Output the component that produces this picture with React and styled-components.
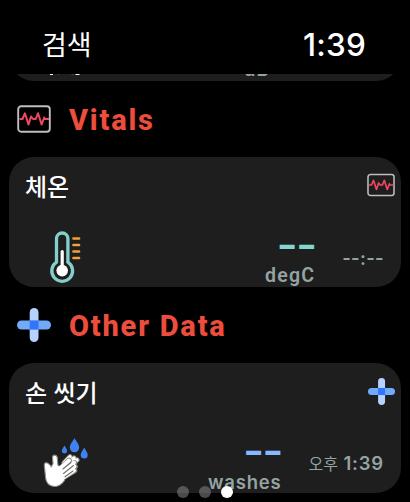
import styled, { createGlobalStyle } from "styled-components";

const GlobalStyle = createGlobalStyle`
  * {
    box-sizing: border-box;
  }
  body {
    margin: 0;
    background: #000;
    font-family: Inter, "Noto Sans CJK KR", sans-serif;
  }
  h1, h2, h3, p {
    margin: 0;
  }
`;

const Screen = styled.main`
  position: relative;
  display: flex;
  flex-direction: column;
  width: 410px;
  height: 502px;
  overflow: hidden;
  background: #000;
  color: #fff;
`;

const TopBar = styled.header`
  display: flex;
  flex: none;
  align-items: center;
  justify-content: space-between;
  height: 74px;
  padding: 16px 44px 0 42px;
`;

const ScreenTitle = styled.h1`
  padding-top: 2px;
  font-size: 27px;
  font-weight: 400;
  line-height: 40px;
`;

const Clock = styled.time`
  font-size: 31.5px;
  font-weight: 500;
  letter-spacing: 0.2px;
  line-height: 40px;
`;

const List = styled.div`
  flex: none;
  padding: 0 9px;
`;

const Peek = styled.div`
  display: flex;
  align-items: flex-end;
  height: 7px;
  overflow: hidden;
`;

const SectionHeader = styled.div`
  display: flex;
  align-items: center;
  gap: 18px;
  height: 76px;
  padding-left: 8px;
`;

const SectionTitle = styled.h2`
  color: #ed4d3d;
  font-family: Roboto, "Noto Sans CJK KR", sans-serif;
  font-size: 29px;
  font-weight: 800;
  letter-spacing: 1.8px;
  line-height: 36px;
  padding-top: 2px;
`;

const Card = styled.article`
  display: flex;
  flex: none;
  flex-direction: column;
  justify-content: space-between;
  width: 392px;
  height: 130px;
  overflow: hidden;
  border-radius: 25px;
  background: #1e1e1e;
`;

const CardTop = styled.div`
  display: flex;
  align-items: center;
  justify-content: space-between;
  height: 56px;
  padding: 0 6px 0 16px;
`;

const CardTitle = styled.h3`
  font-size: 24px;
  font-weight: 500;
  line-height: 36px;
  padding-top: 5px;
`;

const CardBody = styled.div`
  display: flex;
  align-items: flex-end;
  height: 64px;
  padding: 0 17px 0 28px;
`;

const Picture = styled.div`
  display: flex;
  flex: 1;
`;

const Reading = styled.div`
  display: flex;
  flex-direction: column;
  align-items: flex-end;
`;

const Value = styled.p`
  margin: 0 0 6px;
  color: ${(props) => props.$color};
  font-size: 46px;
  font-weight: 500;
  letter-spacing: -2px;
  line-height: 30px;
`;

const Unit = styled.p`
  color: #95a3a3;
  font-family: ${(props) =>
    props.$narrow ? "Roboto, sans-serif" : "Inter, sans-serif"};
  font-size: ${(props) => (props.$narrow ? "19.5px" : "18.5px")};
  font-weight: 600;
  letter-spacing: ${(props) => (props.$narrow ? "1.2px" : "0.8px")};
  line-height: 22px;
`;

const Stamp = styled.time`
  margin: 0 0 17px 27px;
  color: #95a3a3;
  font-size: 18.5px;
  font-weight: 600;
  letter-spacing: ${(props) => (props.$wide ? "0.8px" : "0.3px")};
  line-height: 24px;
`;

const Period = styled.span`
  font-size: 16px;
  font-weight: 400;
  letter-spacing: 0;
`;

const Dots = styled.div`
  position: absolute;
  bottom: 4px;
  left: 177px;
  display: flex;
  gap: 10px;
`;

const Dot = styled.span`
  width: 12px;
  height: 12px;
  border-radius: 50%;
  background: ${(props) => (props.$active ? "#fff" : "rgba(125, 125, 125, 0.6)")};
`;

function VitalsIcon({ size = 34 }) {
  return (
    <svg width={size} height={size} viewBox="0 0 34 34" fill="none">
      <rect x="1.2" y="4.3" width="31.6" height="25.4" rx="3" stroke="#bdbdc2" strokeWidth="1.9" />
      <path
        d="M2.5 17h3l2.4-5.7 3.6 11.2 2.6-8 2 2.5h2.6l2.3-5.7 3.6 11.2 2.6-7 .8 1.5h4"
        stroke="#ee4862"
        strokeWidth="2"
        strokeLinejoin="round"
      />
    </svg>
  );
}

function PlusIcon({ size = 34 }) {
  return (
    <svg width={size} height={size} viewBox="0 0 34 34">
      <rect x="12.7" y="0" width="8.8" height="34" rx="4.4" fill="#b4d2fd" />
      <rect x="0" y="12.5" width="34" height="9" rx="4.5" fill="#72aafa" />
      <rect x="12.7" y="12.5" width="8.8" height="9" fill="#3076f7" />
    </svg>
  );
}

function Thermometer() {
  return (
    <svg width="50" height="56" viewBox="0 0 50 56" fill="none">
      <path
        d="M19.5 32V8.5a5.7 5.7 0 0 1 11.4 0V32a10.4 10.4 0 1 1-11.4 0Z"
        transform="translate(0 -.8)"
        stroke="#83d0cb"
        strokeWidth="3.3"
      />
      <path d="M25.2 20.5V38" stroke="#fff" strokeWidth="3.2" strokeLinecap="round" />
      <circle cx="25.2" cy="39.6" r="5.8" fill="#fff" />
      <path
        d="M36.5 7.5h5.5M36.5 14h5.5M36.5 20.5h5.5M36.5 27h5.5"
        stroke="#f0a139"
        strokeWidth="2.7"
        strokeLinecap="round"
      />
    </svg>
  );
}

function WashingHands() {
  return (
    <svg width="52" height="56" viewBox="0 0 52 56" fill="none">
      <g fill="#3e82f1">
        <path d="M37.5 1c1.4 3 4.7 6 4.7 9.6a4.7 4.7 0 0 1-9.4 0c0-3.6 3.3-6.6 4.7-9.6Z" />
        <path d="M27.5 8.5c.8 1.8 2.6 3.5 2.6 5.8a2.7 2.7 0 0 1-5.3 0c0-2.3 1.9-4 2.7-5.8Z" />
        <path d="M47.2 10.5c1 2.4 3.5 4.8 3.5 7.5a3.5 3.5 0 0 1-7 0c0-2.7 2.5-5.1 3.5-7.5Z" />
      </g>
      <g strokeLinecap="round">
        <path d="M27 26l6-6.3M30 27l7-6M33 28l7-5" stroke="#898985" strokeWidth="5.2" />
        <path d="M27 26l6-6.3M30 27l7-6M33 28l7-5" stroke="#fff" strokeWidth="3.4" />
        <path d="M21 34l11-10.5M22 38l15.5-12M24 40l14-10.3M25 41l12.5-7.5" stroke="#898985" strokeWidth="5.6" />
        <path
          d="M8.2 26c1.8-.8 4 .8 6 3.7l1.8-3-.5-6.5c0-2.8 4.2-2.8 4.7 0l.7 7.8L28 34l-.5 9.5c-2.8 4.2-6.2 6-10 6-5.5 0-8.6-4-8.9-8.7L7.3 28.5c-.2-1.1 0-2.1.9-2.5Z"
          fill="#fff"
          stroke="#898985"
          strokeWidth="1.1"
        />
        <path
          d="M20 34l12-10.5M22 37l15-11.5M23 40.5l14.5-11M23 43l14-9.5"
          stroke="#fff"
          strokeWidth="3.9"
        />
        <path d="M26 32l8-6.5M26.5 36.5l10-8M28 39.8l8-5.8" stroke="#73736f" strokeWidth="1.1" />
      </g>
    </svg>
  );
}

function Ear() {
  return (
    <svg width="50" height="7" viewBox="0 0 50 7">
      <path d="M13 0h3v1h-3zM38.5 0h4v1h-4z" fill="#fff" />
      <path d="M21 0h1v1h-1zM34.5 0h2v1h-2z" fill="#315653" />
    </svg>
  );
}

const PeekBody = styled.div`
  display: flex;
  align-items: flex-end;
  justify-content: space-between;
  height: 130px;
  padding: 0 131px 0 28px;
`;

const PeekUnit = styled(Unit)`
  line-height: 24px;
  letter-spacing: 1.2px;
`;

function MetricCard({ title, icon, picture, value, color, unit, narrow, stamp }) {
  return (
    <Card>
      <CardTop>
        <CardTitle>{title}</CardTitle>
        {icon}
      </CardTop>
      <CardBody>
        <Picture>{picture}</Picture>
        <Reading>
          <Value $color={color}>{value}</Value>
          <Unit $narrow={narrow}>{unit}</Unit>
        </Reading>
        <Stamp $wide={!narrow}>{stamp}</Stamp>
      </CardBody>
    </Card>
  );
}

export default function App() {
  return (
    <>
      <GlobalStyle />
      <Screen>
        <TopBar>
          <ScreenTitle>검색</ScreenTitle>
          <Clock>1:39</Clock>
        </TopBar>
        <List>
          <Peek>
            <Card>
              <PeekBody>
                <Ear />
                <PeekUnit>dB</PeekUnit>
              </PeekBody>
            </Card>
          </Peek>
          <SectionHeader>
            <VitalsIcon />
            <SectionTitle>Vitals</SectionTitle>
          </SectionHeader>
          <MetricCard
            title="체온"
            icon={<VitalsIcon size={28} />}
            picture={<Thermometer />}
            value="--"
            color="#83d5cf"
            unit="degC"
            narrow
            stamp="--:--"
          />
          <SectionHeader>
            <PlusIcon />
            <SectionTitle>Other Data</SectionTitle>
          </SectionHeader>
          <MetricCard
            title="손 씻기"
            icon={<PlusIcon size={27} />}
            picture={<WashingHands />}
            value="--"
            color="#85b8ff"
            unit="washes"
            stamp={
              <>
                <Period>오후</Period> 1:39
              </>
            }
          />
        </List>
        <Dots>
          <Dot />
          <Dot />
          <Dot $active />
        </Dots>
      </Screen>
    </>
  );
}
